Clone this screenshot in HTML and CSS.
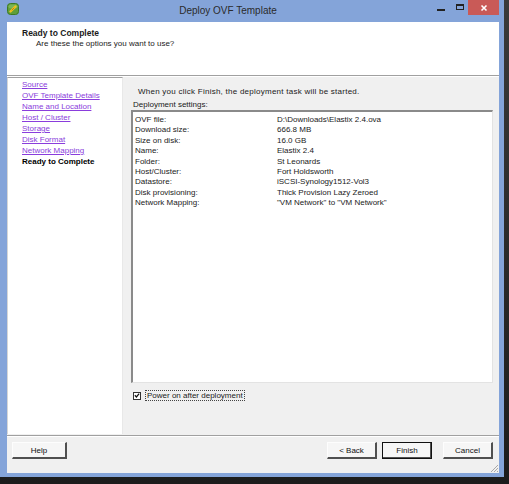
FILE: index.html
```html
<!DOCTYPE html>
<html>
<head>
<meta charset="utf-8">
<link rel="stylesheet" href="styles.css">
</head>
<body>
<div class="screen">
  <div class="window">
    <div class="titlebar">
      <svg class="app-icon" width="12" height="12" viewBox="0 0 12 12">
        <rect x="0.5" y="0.5" width="11" height="11" rx="3" fill="#5f9e3a" stroke="#3d7a22"/>
        <rect x="1.5" y="1.5" width="9" height="4" rx="2" fill="#8cc56a" opacity="0.6"/>
        <path d="M3.5 8.5 L8.5 3.5" stroke="#f2c21b" stroke-width="2.4" stroke-linecap="round"/>
        <path d="M5 7 L7 5" stroke="#c77d12" stroke-width="1" stroke-linecap="round"/>
      </svg>
      <div class="title">Deploy OVF Template</div>
      <div class="controls">
        <span class="ctl min"></span>
        <span class="ctl max"></span>
        <span class="ctl close">
          <svg width="8" height="8" viewBox="0 0 8 8"><path d="M1.5 1.5 L6.5 6.5 M6.5 1.5 L1.5 6.5" stroke="#fff" stroke-width="1.6"/></svg>
        </span>
      </div>
    </div>
    <div class="client">
      <div class="header">
        <div class="h-title">Ready to Complete</div>
        <div class="h-sub">Are these the options you want to use?</div>
      </div>
      <div class="main">
        <nav class="steps">
          <a class="step">Source</a>
          <a class="step">OVF Template Details</a>
          <a class="step">Name and Location</a>
          <a class="step">Host / Cluster</a>
          <a class="step">Storage</a>
          <a class="step">Disk Format</a>
          <a class="step">Network Mapping</a>
          <span class="step current">Ready to Complete</span>
        </nav>
        <section class="content">
          <div class="intro">When you click Finish, the deployment task will be started.</div>
          <div class="settings-label">Deployment settings:</div>
          <div class="settings">
            <div class="row"><span class="k">OVF file:</span><span class="v">D:\Downloads\Elastix 2.4.ova</span></div>
            <div class="row"><span class="k">Download size:</span><span class="v">666.8 MB</span></div>
            <div class="row"><span class="k">Size on disk:</span><span class="v">16.0 GB</span></div>
            <div class="row"><span class="k">Name:</span><span class="v">Elastix 2.4</span></div>
            <div class="row"><span class="k">Folder:</span><span class="v">St Leonards</span></div>
            <div class="row"><span class="k">Host/Cluster:</span><span class="v">Fort Holdsworth</span></div>
            <div class="row"><span class="k">Datastore:</span><span class="v">iSCSI-Synology1512-Vol3</span></div>
            <div class="row"><span class="k">Disk provisioning:</span><span class="v">Thick Provision Lazy Zeroed</span></div>
            <div class="row"><span class="k">Network Mapping:</span><span class="v">"VM Network" to "VM Network"</span></div>
          </div>
          <label class="power">
            <span class="checkbox">
              <svg width="7" height="7" viewBox="0 0 7 7"><path d="M1 3.2 L2.8 5.2 L6 1.2" fill="none" stroke="#111" stroke-width="1.4"/></svg>
            </span>
            <span class="power-text">Power on after deployment</span>
          </label>
        </section>
      </div>
      <div class="buttons">
        <button class="btn">Help</button>
        <div class="spacer"></div>
        <button class="btn">&lt; Back</button>
        <button class="btn default">Finish</button>
        <button class="btn cancel">Cancel</button>
        <svg class="grip" width="9" height="9" viewBox="0 0 9 9">
          <path d="M8 1 L1 8 M8 4 L4 8 M8 7 L7 8" stroke="#a8a8a8" stroke-width="1"/>
        </svg>
      </div>
    </div>
  </div>
</div>
</body>
</html>
```

FILE: styles.css
```css
* { box-sizing: border-box; }
html, body { margin: 0; padding: 0; }
body {
  width: 509px;
  height: 484px;
  overflow: hidden;
  background: #2a2a2a;
  font-family: "Liberation Sans", Arial, sans-serif;
  font-size: 8px;
  color: #1a1a1a;
}
.screen {
  width: 509px;
  height: 484px;
  background: linear-gradient(#3a3a3a, #1c1c1c);
}
.window {
  width: 504px;
  height: 477px;
  background: #84a4d9;
  padding: 0 5px 4px 7px;
  display: flex;
  flex-direction: column;
}
.titlebar {
  height: 22px;
  display: flex;
  align-items: flex-start;
  position: relative;
}
.app-icon { margin-top: 3px; flex: none; }
.title {
  flex: 1;
  text-align: center;
  font-size: 10px;
  line-height: 22px;
  color: #2b2b2b;
  padding-left: 0;
}
.controls {
  display: flex;
  align-items: flex-start;
  height: 16px;
}
.ctl { display: block; position: relative; }
.min { width: 8px; height: 2px; background: #222; margin-top: 9px; margin-right: 11px; }
.max { width: 8px; height: 6px; border: 1px solid #222; border-top-width: 2px; margin-top: 4px; margin-right: 4px; }
.close {
  width: 31px;
  height: 15px;
  background: #c95a57;
  display: flex;
  align-items: center;
  justify-content: center;
}
.client {
  flex: 1;
  background: #f0f0f0;
  display: flex;
  flex-direction: column;
}
.header {
  height: 54px;
  background: #fff;
  border-bottom: 1px solid #a0a0a0;
  box-shadow: 0 1px 0 #fff;
  padding: 6px 0 0 15px;
  flex: none;
}
.h-title { font-weight: bold; font-size: 8.5px; line-height: 10px; }
.h-sub { padding-left: 14px; line-height: 12px; }
.main {
  flex: 1;
  display: flex;
  margin-top: 1px;
  min-height: 0;
}
.steps {
  width: 116px;
  background: #fff;
  border-top: 1px solid #a0a0a0;
  border-left: 1px solid #d6d6d6;
  border-right: 1px solid #e8e8e8;
  padding: 1px 0 0 14px;
  display: flex;
  flex-direction: column;
  flex: none;
}
.step {
  line-height: 11px;
  color: #8a3ddc;
  text-decoration: underline;
  white-space: nowrap;
}
.step.current { color: #000; font-weight: bold; text-decoration: none; }
.content {
  flex: 1;
  padding: 10px 6px 0 8px;
  display: flex;
  flex-direction: column;
}
.intro { padding-left: 7px; line-height: 10px; letter-spacing: 0.25px; }
.settings-label { line-height: 10px; margin-top: 3px; padding-left: 2px; }
.settings {
  height: 273px;
  background: #fff;
  border-top: 2px solid #8a8a8a;
  border-left: 2px solid #8a8a8a;
  border-right: 1px solid #e3e3e3;
  border-bottom: 1px solid #e3e3e3;
  padding: 3px 0 0 2px;
}
.row { display: flex; line-height: 10.4px; white-space: nowrap; }
.k { width: 142px; flex: none; }
.power {
  display: flex;
  align-items: center;
  margin-top: 7px;
  padding-left: 2px;
}
.checkbox {
  width: 8px;
  height: 8px;
  background: #fff;
  border: 1px solid #333;
  display: flex;
  align-items: center;
  justify-content: center;
  margin-right: 4px;
}
.power-text {
  border: 1px dotted #444;
  padding: 0 1px;
  line-height: 9px;
}
.buttons {
  height: 38px;
  flex: none;
  border-top: 1px solid #a0a0a0;
  box-shadow: inset 0 1px 0 #fff;
  margin-top: 1px;
  display: flex;
  align-items: flex-start;
  padding: 6px 6px 0 5px;
  position: relative;
}
.spacer { flex: 1; }
.btn {
  width: 50px;
  height: 17px;
  font-family: inherit;
  font-size: 8px;
  color: #111;
  background: #f6f6f6;
  border-top: 1px solid #fdfdfd;
  border-left: 1px solid #fdfdfd;
  border-right: 2px solid #505050;
  border-bottom: 2px solid #505050;
  padding: 0;
  margin: 0;
}
.btn:first-child { width: 55px; }
.btn + .btn { margin-left: 5px; }
.btn.default {
  border: 1px solid #111;
  box-shadow: inset -1px -1px 0 #505050;
}
.btn.cancel { margin-left: 11px; }
.grip { position: absolute; right: 0; bottom: 0; }
```
